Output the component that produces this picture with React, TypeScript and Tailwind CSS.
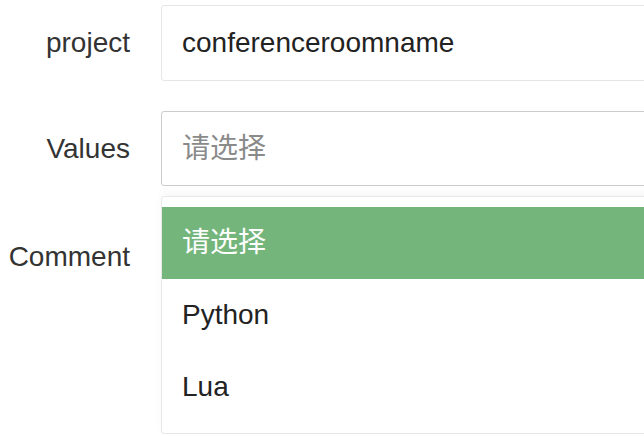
const font = { fontFamily: '"Liberation Sans", "Noto Sans CJK SC", sans-serif' };

const options = ["请选择", "Python", "Lua"];

function Label({ children }: { children: React.ReactNode }) {
  return (
    <div className="flex h-[76px] w-[130px] shrink-0 items-center justify-end text-[28px] text-[#333]">
      {children}
    </div>
  );
}

export default function App() {
  return (
    <div className="h-[436px] w-[644px] overflow-hidden bg-white pt-[5px]" style={font}>
      <div className="flex flex-col gap-[30px]">
        <div className="flex gap-[31px]">
          <Label>project</Label>
          <div className="flex h-[76px] w-[620px] shrink-0 items-center rounded-[3px] border border-[#e6e6e6] bg-white px-[20px] text-[28px] text-[#222]">
            conferenceroomname
          </div>
        </div>

        <div className="flex gap-[31px]">
          <Label>Values</Label>
          <div className="relative w-[620px] shrink-0">
            <div className="flex h-[75px] items-center rounded-[3px] border border-[#cccccc] bg-white px-[20px] text-[28px] text-[#8a8a8a]">
              请选择
            </div>
            <ul className="absolute left-0 top-[calc(100%+9px)] z-10 w-full rounded-[3px] border border-[#e8e8e8] bg-white py-[10px] shadow-[0_-4px_8px_rgba(0,0,0,0.03)]">
              {options.map((o, i) => (
                <li
                  key={o}
                  className={`flex h-[72px] items-center px-[20px] text-[28px] ${
                    i === 0 ? "bg-[#74b57c] text-white" : "text-[#222]"
                  }`}
                >
                  {o}
                </li>
              ))}
            </ul>
          </div>
        </div>

        <div className="mt-[2px] flex gap-[31px]">
          <Label>Comment</Label>
          <div className="h-[180px] w-[620px] shrink-0 rounded-[3px] border border-[#cccccc] bg-white" />
        </div>
      </div>
    </div>
  );
}
